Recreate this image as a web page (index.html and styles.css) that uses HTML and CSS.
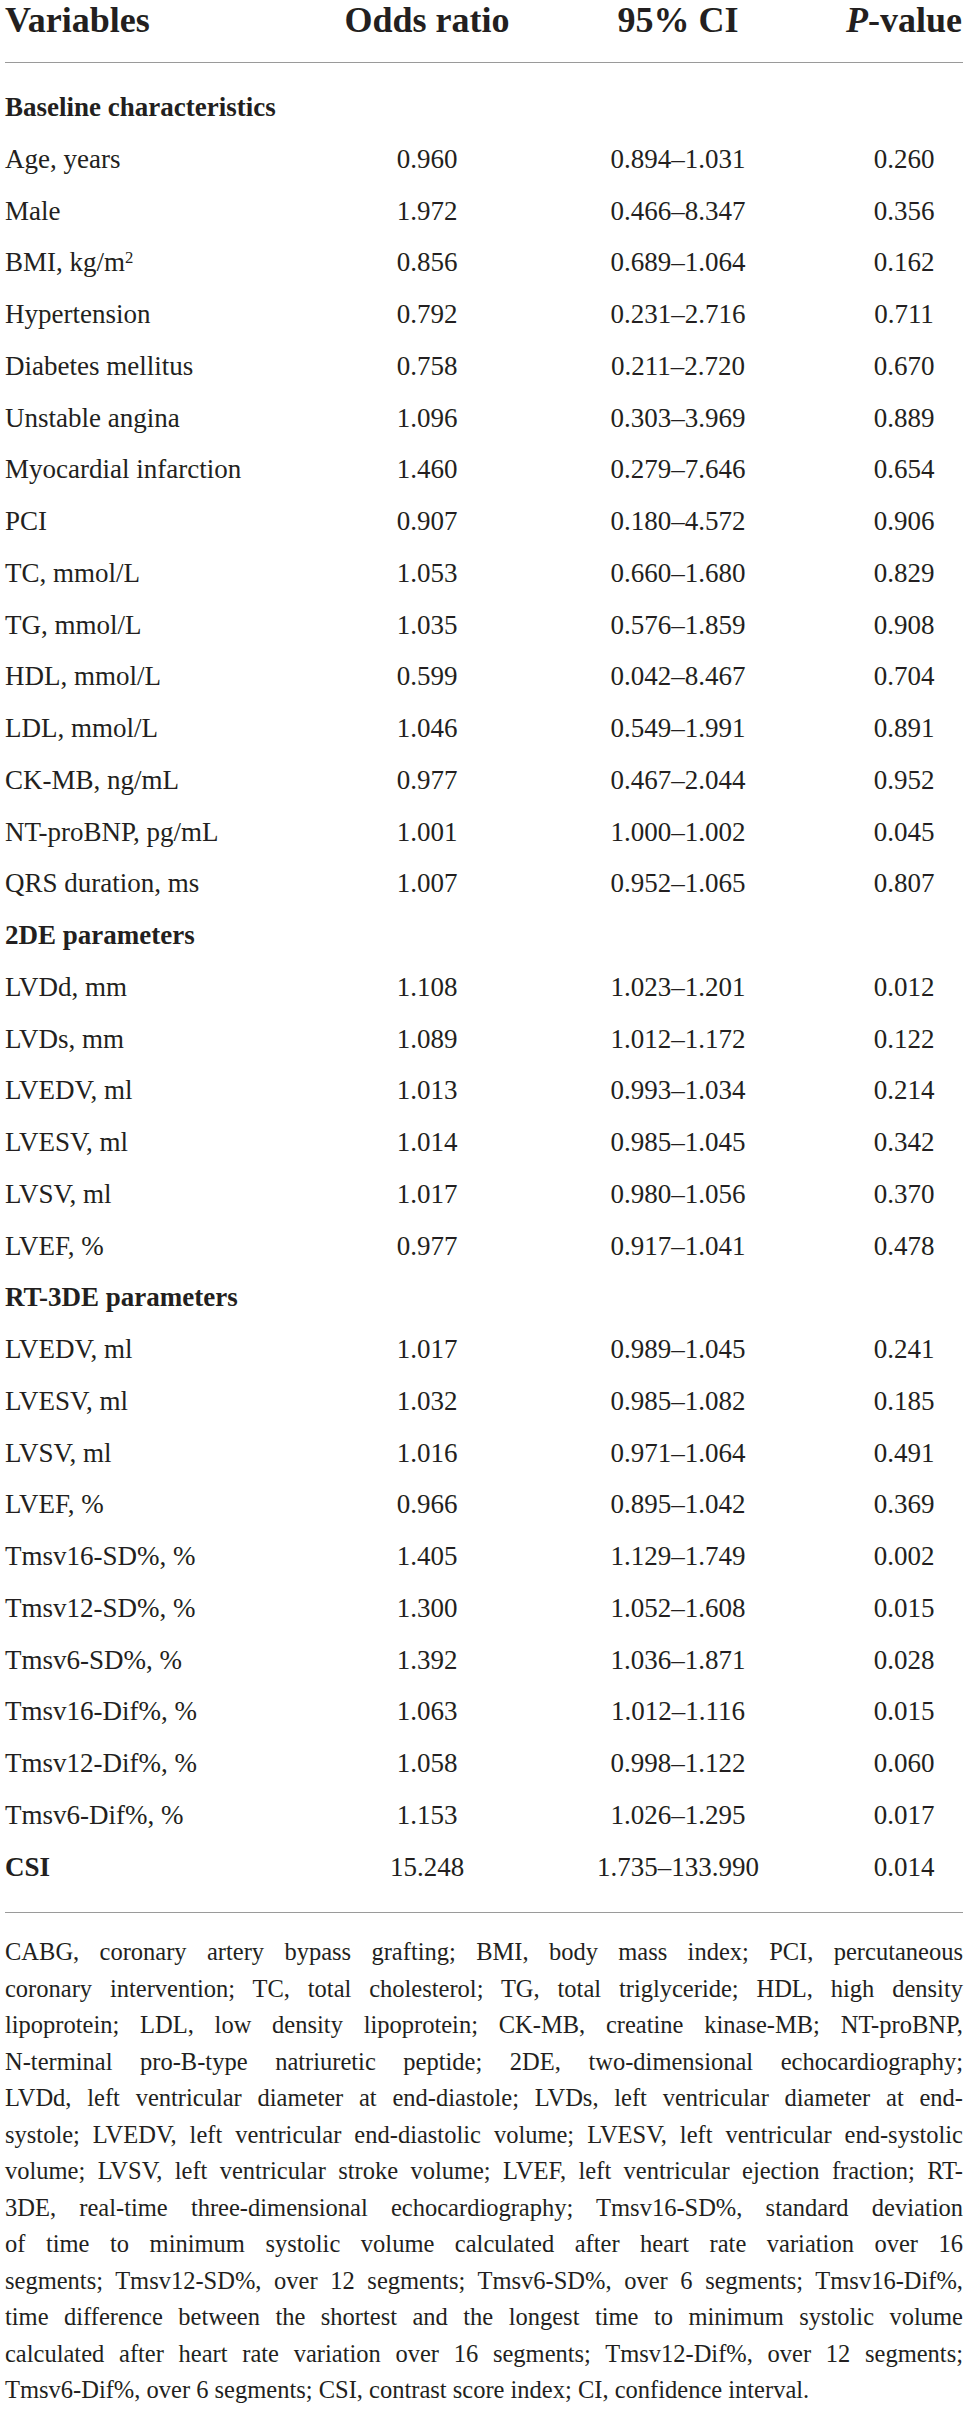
FILE: index.html
```html
<!DOCTYPE html>
<html lang="en">
<head>
<meta charset="utf-8">
<title>Univariate logistic regression</title>
<link rel="stylesheet" href="styles.css">
</head>
<body>
<div class="page">
  <div class="thead row">
    <div>Variables</div>
    <div class="c">Odds ratio</div>
    <div class="c">95% CI</div>
    <div class="c p"><i>P</i>-value</div>
  </div>
  <div class="tbody">
    <div class="row sec"><div>Baseline characteristics</div><div></div><div></div><div class="p"></div></div>
    <div class="row"><div>Age, years</div><div class="c">0.960</div><div class="c">0.894–1.031</div><div class="c p">0.260</div></div>
    <div class="row"><div>Male</div><div class="c">1.972</div><div class="c">0.466–8.347</div><div class="c p">0.356</div></div>
    <div class="row"><div>BMI, kg/m<sup>2</sup></div><div class="c">0.856</div><div class="c">0.689–1.064</div><div class="c p">0.162</div></div>
    <div class="row"><div>Hypertension</div><div class="c">0.792</div><div class="c">0.231–2.716</div><div class="c p">0.711</div></div>
    <div class="row"><div>Diabetes mellitus</div><div class="c">0.758</div><div class="c">0.211–2.720</div><div class="c p">0.670</div></div>
    <div class="row"><div>Unstable angina</div><div class="c">1.096</div><div class="c">0.303–3.969</div><div class="c p">0.889</div></div>
    <div class="row"><div>Myocardial infarction</div><div class="c">1.460</div><div class="c">0.279–7.646</div><div class="c p">0.654</div></div>
    <div class="row"><div>PCI</div><div class="c">0.907</div><div class="c">0.180–4.572</div><div class="c p">0.906</div></div>
    <div class="row"><div>TC, mmol/L</div><div class="c">1.053</div><div class="c">0.660–1.680</div><div class="c p">0.829</div></div>
    <div class="row"><div>TG, mmol/L</div><div class="c">1.035</div><div class="c">0.576–1.859</div><div class="c p">0.908</div></div>
    <div class="row"><div>HDL, mmol/L</div><div class="c">0.599</div><div class="c">0.042–8.467</div><div class="c p">0.704</div></div>
    <div class="row"><div>LDL, mmol/L</div><div class="c">1.046</div><div class="c">0.549–1.991</div><div class="c p">0.891</div></div>
    <div class="row"><div>CK-MB, ng/mL</div><div class="c">0.977</div><div class="c">0.467–2.044</div><div class="c p">0.952</div></div>
    <div class="row"><div>NT-proBNP, pg/mL</div><div class="c">1.001</div><div class="c">1.000–1.002</div><div class="c p">0.045</div></div>
    <div class="row"><div>QRS duration, ms</div><div class="c">1.007</div><div class="c">0.952–1.065</div><div class="c p">0.807</div></div>
    <div class="row sec"><div>2DE parameters</div><div></div><div></div><div class="p"></div></div>
    <div class="row"><div>LVDd, mm</div><div class="c">1.108</div><div class="c">1.023–1.201</div><div class="c p">0.012</div></div>
    <div class="row"><div>LVDs, mm</div><div class="c">1.089</div><div class="c">1.012–1.172</div><div class="c p">0.122</div></div>
    <div class="row"><div>LVEDV, ml</div><div class="c">1.013</div><div class="c">0.993–1.034</div><div class="c p">0.214</div></div>
    <div class="row"><div>LVESV, ml</div><div class="c">1.014</div><div class="c">0.985–1.045</div><div class="c p">0.342</div></div>
    <div class="row"><div>LVSV, ml</div><div class="c">1.017</div><div class="c">0.980–1.056</div><div class="c p">0.370</div></div>
    <div class="row"><div>LVEF, %</div><div class="c">0.977</div><div class="c">0.917–1.041</div><div class="c p">0.478</div></div>
    <div class="row sec"><div>RT-3DE parameters</div><div></div><div></div><div class="p"></div></div>
    <div class="row"><div>LVEDV, ml</div><div class="c">1.017</div><div class="c">0.989–1.045</div><div class="c p">0.241</div></div>
    <div class="row"><div>LVESV, ml</div><div class="c">1.032</div><div class="c">0.985–1.082</div><div class="c p">0.185</div></div>
    <div class="row"><div>LVSV, ml</div><div class="c">1.016</div><div class="c">0.971–1.064</div><div class="c p">0.491</div></div>
    <div class="row"><div>LVEF, %</div><div class="c">0.966</div><div class="c">0.895–1.042</div><div class="c p">0.369</div></div>
    <div class="row"><div>Tmsv16-SD%, %</div><div class="c">1.405</div><div class="c">1.129–1.749</div><div class="c p">0.002</div></div>
    <div class="row"><div>Tmsv12-SD%, %</div><div class="c">1.300</div><div class="c">1.052–1.608</div><div class="c p">0.015</div></div>
    <div class="row"><div>Tmsv6-SD%, %</div><div class="c">1.392</div><div class="c">1.036–1.871</div><div class="c p">0.028</div></div>
    <div class="row"><div>Tmsv16-Dif%, %</div><div class="c">1.063</div><div class="c">1.012–1.116</div><div class="c p">0.015</div></div>
    <div class="row"><div>Tmsv12-Dif%, %</div><div class="c">1.058</div><div class="c">0.998–1.122</div><div class="c p">0.060</div></div>
    <div class="row"><div>Tmsv6-Dif%, %</div><div class="c">1.153</div><div class="c">1.026–1.295</div><div class="c p">0.017</div></div>
    <div class="row"><div class="b">CSI</div><div class="c">15.248</div><div class="c">1.735–133.990</div><div class="c p">0.014</div></div>
  </div>
  <p class="foot">
    <span class="ln">CABG, coronary artery bypass grafting; BMI, body mass index; PCI, percutaneous</span>
    <span class="ln">coronary intervention; TC, total cholesterol; TG, total triglyceride; HDL, high density</span>
    <span class="ln">lipoprotein; LDL, low density lipoprotein; CK-MB, creatine kinase-MB; NT-proBNP,</span>
    <span class="ln">N-terminal pro-B-type natriuretic peptide; 2DE, two-dimensional echocardiography;</span>
    <span class="ln">LVDd, left ventricular diameter at end-diastole; LVDs, left ventricular diameter at end-</span>
    <span class="ln">systole; LVEDV, left ventricular end-diastolic volume; LVESV, left ventricular end-systolic</span>
    <span class="ln">volume; LVSV, left ventricular stroke volume; LVEF, left ventricular ejection fraction; RT-</span>
    <span class="ln">3DE, real-time three-dimensional echocardiography; Tmsv16-SD%, standard deviation</span>
    <span class="ln">of time to minimum systolic volume calculated after heart rate variation over 16</span>
    <span class="ln">segments; Tmsv12-SD%, over 12 segments; Tmsv6-SD%, over 6 segments; Tmsv16-Dif%,</span>
    <span class="ln">time difference between the shortest and the longest time to minimum systolic volume</span>
    <span class="ln">calculated after heart rate variation over 16 segments; Tmsv12-Dif%, over 12 segments;</span>
    <span class="ln last">Tmsv6-Dif%, over 6 segments; CSI, contrast score index; CI, confidence interval.</span>
  </p>
</div>
</body>
</html>
```

FILE: styles.css
```css
html, body {
  margin: 0;
  padding: 0;
  background: #ffffff;
}

body {
  font-family: "Liberation Serif", "Times New Roman", serif;
  color: #231f20;
}

.page {
  padding: 0 5px;
}

.row {
  display: grid;
  grid-template-columns: 325px 194px 308px 131px;
}

.c {
  text-align: center;
}

.p {
  padding-left: 13px;
}

.thead {
  font-size: 36px;
  font-weight: bold;
  line-height: 40px;
  padding-bottom: 22px;
  border-bottom: 1px solid #9a9a9a;
}

.thead i {
  font-style: italic;
}

.tbody {
  font-size: 27px;
  line-height: 51.75px;
  padding: 19px 0;
  border-bottom: 1px solid #9a9a9a;
}

.sec > div:first-child {
  font-weight: bold;
  white-space: nowrap;
}

.b {
  font-weight: bold;
}

sup {
  font-size: 0.62em;
  line-height: 0;
  vertical-align: 0.5em;
}

.foot {
  margin: 0;
  padding-top: 21px;
  font-size: 24.5px;
  line-height: 36.5px;
}

.ln {
  display: block;
  text-align: justify;
  text-align-last: justify;
}

.ln.last {
  text-align-last: left;
}
```
